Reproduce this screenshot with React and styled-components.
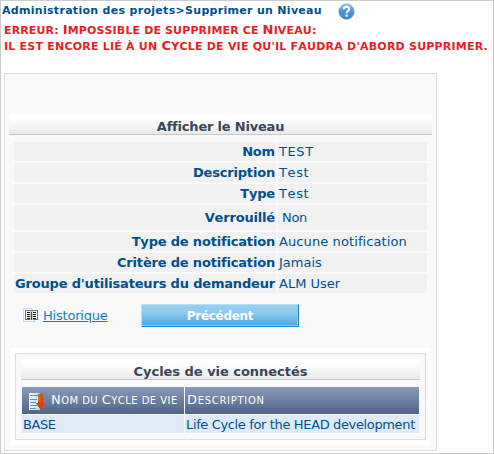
import React from "react";
import styled, { createGlobalStyle, css } from "styled-components";

const Global = createGlobalStyle`
  *, *::before, *::after { box-sizing: border-box; }
  html, body { margin: 0; padding: 0; background: #fff; }
  body {
    font-family: Verdana, "DejaVu Sans", sans-serif;
    font-size: 13px;
    line-height: 16px;
    font-kerning: none;
    font-variant-ligatures: none;
    color: #00508f;
  }
`;

const Page = styled.main`
  width: 494px;
  height: 454px;
  border: 1px solid #ccc;
  overflow: hidden;
`;

const Breadcrumb = styled.header`
  display: flex;
  align-items: flex-start;
  height: 20px;
  padding: 2px 0 0 1px;
  font-size: 11px;
  font-weight: bold;
  white-space: nowrap;
`;

const Label = styled.span`
  letter-spacing: ${(p) => p.$spacing || 0}px;
  white-space: nowrap;
`;

const HelpIcon = styled.svg`
  display: block;
  margin: 0 138px 0 auto;
  flex: none;
`;

const ErrorMessage = styled.div`
  height: 52px;
  padding: 2px 0 0 3px;
  color: #ec1c24;
  font-size: 11px;
  font-weight: bold;
  white-space: nowrap;
`;

const ErrorLine = styled.div`
  height: 16px;
  line-height: 16px;
`;

const Capital = styled.span`
  font-size: ${(p) => p.$size}px;
  line-height: 1;
`;

const Panel = styled.section`
  display: flex;
  flex-direction: column;
  width: 433px;
  height: 378px;
  margin-left: 3px;
  padding: 40px 4px 5px;
  border: 1px solid #ddd;
  background: #f9f9f9;
`;

const TitleBar = styled.h2`
  display: flex;
  align-items: center;
  justify-content: center;
  height: 21px;
  margin: 0;
  padding-top: 5px;
  border-bottom: 1px solid #c8c8cc;
  background: linear-gradient(#fff 0%, #fff 20%, #e8e9eb 100%);
  color: #3a4557;
  font-size: 13px;
  font-weight: bold;
`;

const Fields = styled.dl`
  display: flex;
  flex-direction: column;
  gap: 2px;
  margin: 7px 5px 0;
`;

const Field = styled.div`
  display: grid;
  grid-template-columns: 262px 149px;
  column-gap: 2px;
  height: ${(p) => (p.$tall ? 25 : 19)}px;
  border-bottom: 1px solid #fff;
  line-height: ${(p) => (p.$tall ? 25 : 19)}px;
`;

const cell = css`
  margin: 0;
  background: #f1f1f1;
  white-space: nowrap;
`;

const Term = styled.dt`
  ${cell}
  padding-right: 1px;
  text-align: right;
  font-weight: bold;
`;

const Value = styled.dd`
  ${cell}
  padding-left: ${(p) => (p.$indented ? 4 : 1)}px;
`;

const Actions = styled.div`
  display: flex;
  height: 23px;
  margin: 11px 0 0 14px;
`;

const HistoryIcon = styled.svg`
  display: block;
  margin-top: 4px;
  flex: none;
`;

const HistoryLink = styled.a`
  width: 98px;
  margin: 4px 0 0 5px;
  color: #0d7fd0;
  text-decoration: underline;
`;

const BackButton = styled.button`
  width: 158px;
  height: 23px;
  padding: 1px 0 0;
  border: 1px solid #b4e3fa;
  border-right-color: #1b83c6;
  border-bottom-color: #1b83c6;
  background: linear-gradient(#9bd0f1, #8bc8ee 40%, #48a7de);
  box-shadow: inset -1px -1px 0 #8ccdf2;
  color: #fff;
  font: bold 12px/16px Verdana, "DejaVu Sans", sans-serif;
`;

const LinkedArea = styled.div`
  height: 97px;
  margin: 21px 1px 0;
  padding: 5px;
  background: #fff;
`;

const LinkedBox = styled.section`
  width: 411px;
  height: 87px;
  padding: 5px;
  border: 1px solid #ddd;
  background: #f9f9f9;
`;

const Table = styled.div`
  display: grid;
  grid-template-columns: 162px 234px;
  grid-template-rows: 27px 18px;
  gap: 1px;
  margin: 7px 1px 0;
  width: 397px;
  background: #fff;
  border-bottom: 1px solid #fff;
  box-sizing: content-box;
`;

const HeadCell = styled.div`
  display: flex;
  align-items: center;
  padding: 1px 0 0 ${(p) => (p.$first ? 7 : 2)}px;
  background: linear-gradient(#8a9bba, #4f648a);
  color: #fff;
  font-size: 10px;
  white-space: nowrap;
`;

const SortIcon = styled.svg`
  display: block;
  margin: 1px 6px 0 0;
  flex: none;
`;

const BodyCell = styled.div`
  padding-left: 1px;
  background: #deebf7;
  line-height: 19px;
  white-space: nowrap;
`;

const fields = [
  { term: "Nom", value: "TEST", spacing: 0.6 },
  { term: "Description", value: "Test", spacing: 0.6 },
  { term: "Type", value: "Test", spacing: 0.6 },
  { term: "Verrouillé", value: "Non", tall: true, spacing: -0.3 },
  { term: "Type de notification", value: "Aucune notification", spacing: 0.1 },
  { term: "Critère de notification", value: "Jamais" },
  { term: "Groupe d'utilisateurs du demandeur", value: "ALM User" },
];

function Help() {
  return (
    <HelpIcon width="17" height="17" viewBox="0 0 17 17" aria-label="Aide">
      <defs>
        <linearGradient id="help" x1="0" y1="0" x2="0" y2="1">
          <stop offset="0" stopColor="#8fc0ea" />
          <stop offset=".45" stopColor="#4f98d8" />
          <stop offset="1" stopColor="#2f86cf" />
        </linearGradient>
        <linearGradient id="rim" x1="0" y1="0" x2="0" y2="1">
          <stop offset="0" stopColor="#8db6da" />
          <stop offset="1" stopColor="#4a78a6" />
        </linearGradient>
      </defs>
      <circle cx="8.5" cy="8.5" r="7.6" fill="url(#help)" stroke="url(#rim)" />
      <path d="M5.7 6.2C5.8 3 11.2 3 11.2 6c0 2-2.6 2-2.6 4.2" fill="none" stroke="#fff" strokeWidth="2" />
      <rect x="7.5" y="11.5" width="2.2" height="2.2" fill="#fff" />
    </HelpIcon>
  );
}

function History() {
  return (
    <HistoryIcon width="15" height="15" viewBox="0 0 15 15" shapeRendering="crispEdges" aria-hidden="true">
      <path d="M.5 .5H8.5L11.5 3.5V13.5H.5Z" fill="#f6fbff" stroke="#c4dcee" />
      <rect x="2.5" y="2.5" width="12" height="9" fill="#fff" stroke="#5578b8" />
      <rect x="7" y="3" width="3" height="9" fill="#d8d2b8" />
      <path d="M4 4.5H7M4 6.5H7M4 8.5H7M4 10.5H7M10 4.5H13M10 6.5H13M10 8.5H13M10 10.5H13" stroke="#111" />
      <path d="M8.5 4V12" stroke="#55503c" />
    </HistoryIcon>
  );
}

function Sort() {
  return (
    <SortIcon width="16" height="18" viewBox="0 0 16 18" aria-hidden="true">
      <defs>
        <linearGradient id="arrow">
          <stop offset="0" stopColor="#f5800f" />
          <stop offset="1" stopColor="#b83206" />
        </linearGradient>
        <linearGradient id="sheet">
          <stop offset="0" stopColor="#fff" />
          <stop offset="1" stopColor="#9fdcff" />
        </linearGradient>
      </defs>
      <path d="M0 0H11V17H0Z" fill="url(#sheet)" />
      <path d="M1 2.5H9M1 6.5H8M1 9.5H7M1 12.5H8M1 15.5H7" stroke="#5e93c8" />
      <path d="M9 .8H14V10H16L11.5 16.5 7 10H9Z" fill="url(#arrow)" />
      <path d="M7 10H9V9H14V10H16L11.5 16.5Z" fill="#e23a0a" />
    </SortIcon>
  );
}

export default function App() {
  return (
    <>
      <Global />
      <Page>
        <Breadcrumb>
          <Label $spacing={0.3}>Administration des projets&gt;Supprimer un Niveau</Label>
          <Help />
        </Breadcrumb>
        <ErrorMessage>
          <ErrorLine>
            <Label $spacing={0.14}>ERREUR: <Capital $size={13}>I</Capital>MPOSSIBLE DE SUPPRIMER CE <Capital $size={13}>N</Capital>IVEAU:</Label>
          </ErrorLine>
          <ErrorLine>
            <Label $spacing={0.22}>IL EST ENCORE LIÉ À UN <Capital $size={13}>C</Capital>YCLE DE VIE QU'IL FAUDRA D'ABORD SUPPRIMER.</Label>
          </ErrorLine>
        </ErrorMessage>
        <Panel>
          <TitleBar><Label $spacing={-0.2}>Afficher le Niveau</Label></TitleBar>
          <Fields>
            {fields.map((f) => (
              <Field key={f.term} $tall={f.tall}>
                <Term><Label $spacing={-0.18}>{f.term}</Label></Term>
                <Value $indented={f.tall}><Label $spacing={f.spacing}>{f.value}</Label></Value>
              </Field>
            ))}
          </Fields>
          <Actions>
            <History />
            <HistoryLink href="#historique"><Label $spacing={-0.2}>Historique</Label></HistoryLink>
            <BackButton type="button"><Label $spacing={-0.3}>Précédent</Label></BackButton>
          </Actions>
          <LinkedArea>
            <LinkedBox>
              <TitleBar><Label $spacing={-0.03}>Cycles de vie connectés</Label></TitleBar>
              <Table>
                <HeadCell $first>
                  <Sort />
                  <Label $spacing={0.45}><Capital $size={13}>N</Capital>OM DU <Capital $size={13}>C</Capital>YCLE DE VIE</Label>
                </HeadCell>
                <HeadCell>
                  <Label $spacing={0.7}><Capital $size={13}>D</Capital>ESCRIPTION</Label>
                </HeadCell>
                <BodyCell><Label $spacing={-0.4}>BASE</Label></BodyCell>
                <BodyCell><Label $spacing={-0.36}>Life Cycle for the HEAD development</Label></BodyCell>
              </Table>
            </LinkedBox>
          </LinkedArea>
        </Panel>
      </Page>
    </>
  );
}
